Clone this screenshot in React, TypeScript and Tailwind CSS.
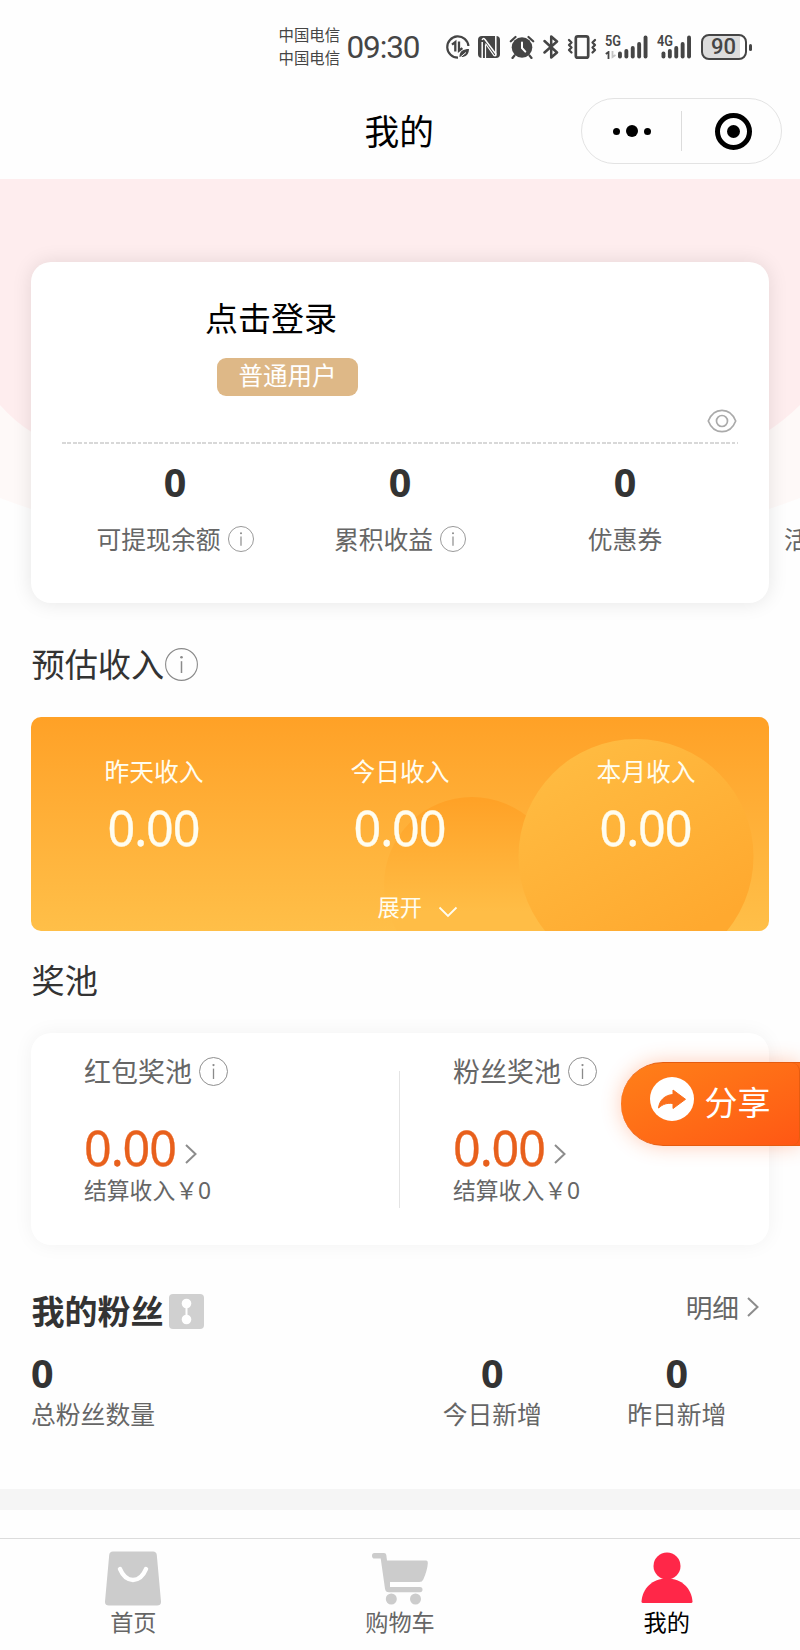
import React from "react";

const FONT = "font-['Noto_Sans','Noto_Sans_CJK_SC',sans-serif]";

function Info({ className }: { className: string }) {
  return (
    <svg viewBox="0 0 33 33" className={className} fill="none" stroke="#8a8a8a">
      <circle cx="16.5" cy="16.5" r="15.9" strokeWidth="1.1" />
      <path d="M16.5 13.2V25" strokeWidth="1.5" />
      <circle cx="16.5" cy="9.2" r="1.3" fill="#8a8a8a" stroke="none" />
    </svg>
  );
}

function Chevron({ className }: { className: string }) {
  return (
    <svg viewBox="0 0 12 20" className={className} fill="none" stroke="#8c8c8c" strokeWidth="2">
      <path d="M1 1l9.5 9L1 19" />
    </svg>
  );
}

function Signal({ label, x0 }: { label: string; x0: number }) {
  const heights = [7, 9.5, 12.5, 16.5, 23];
  return (
    <svg viewBox="0 0 44 26" className="h-[26px] w-[44px] shrink-0 overflow-visible">
      <text x="0" y="12.3" fontFamily="Roboto" fontWeight="600" fontSize="15.5" textLength="16" lengthAdjust="spacingAndGlyphs" fill="#454545">
        {label}
      </text>
      {heights.map((h, i) => (
        <rect key={i} x={x0 + i * 6.4} y={24.5 - h} width="3.9" height={h} rx="1.9" fill="#454545" />
      ))}
    </svg>
  );
}

function StatusBar() {
  return (
    <div className="flex h-[84px] items-start pl-[278.5px] pt-[24px] text-[#454545]">
      <div className="w-[68px] text-[15.4px] leading-[23px]">
        <div>中国电信</div>
        <div>中国电信</div>
      </div>
      <div className="mt-[4px] w-[98.5px] font-['Roboto'] text-[31.5px] leading-[40px] tracking-[-1.1px]">09:30</div>
      <div className="mt-[10px] flex items-center">
        <svg viewBox="0 0 26 26" className="h-[26px] w-[26px]" fill="none" stroke="#454545" strokeWidth="2.2">
          <path d="M23.4 12A10.6 10.6 0 1 0 13 23.6" />
          <path d="M7 10.6L10.3 8v9.5M14 7.5v9.2l3.4-2.6" strokeWidth="2.3" />
          <path d="M14.5 23c-.2-6 4-8 9.5-8-.2 6-3.5 8.5-9.5 8z" fill="#454545" stroke="none" />
          <path d="M15 23.5l6-5" stroke="#fff" strokeWidth="1" />
        </svg>
        <svg viewBox="0 0 22 24" className="ml-[7px] h-[24px] w-[22px]">
          <rect x="0" y="1" width="22" height="22" rx="4" fill="#454545" />
          <path d="M4.2 7v16M4.2 5Q5 2.500 7 4.500L17.800 19V1" stroke="#fff" strokeWidth="1.500" fill="none" />
          <path d="M7.500 9.500V23" stroke="#fff" strokeWidth="1.200" />
          <path d="M7.500 8.500L16 20.500Q18 22 17.800 18" stroke="#fff" strokeWidth="1.200" fill="none" />
        </svg>
        <svg viewBox="0 0 26 24" className="ml-[9px] h-[24px] w-[26px]" fill="none" stroke="#454545" strokeLinecap="round">
          <circle cx="13" cy="12.500" r="10.300" fill="#454545" stroke="none" />
          <path d="M1.800 6.300L6.500 2M24.200 6.300L19.500 2M5.500 20.500L3.500 23M20.500 20.500l2 2.500" strokeWidth="2.200" />
          <path d="M13 7.500v5.500l3.300 3.600" stroke="#fff" strokeWidth="2" />
        </svg>
        <svg viewBox="0 0 16 26" className="ml-[8px] h-[26px] w-[16px]" fill="none" stroke="#454545" strokeWidth="2.500" strokeLinejoin="round" strokeLinecap="round">
          <path d="M1.500 7L14 18.500 8.200 23.500V2.500L14 7.500 1.500 18.500" />
        </svg>
        <svg viewBox="0 0 30 26" className="ml-[8px] h-[26px] w-[30px]" fill="none" stroke="#454545" strokeLinejoin="round" strokeLinecap="round">
          <rect x="8.800" y="2.300" width="12.400" height="21.400" rx="2" strokeWidth="2.700" />
          <path d="M2 6l2.500 2.500L2 11l2.500 2.500L2 16l2.500 2.500M28 6l-2.500 2.500L28 11l-2.500 2.500L28 16l-2.500 2.500" strokeWidth="2.300" />
        </svg>
        <div className="relative ml-[8px]">
          <Signal label="5G" x0={13} />
          <svg viewBox="0 0 12 8" className="absolute left-0 top-[17px] h-[8px] w-[12px]" fill="none" strokeWidth="1.800">
            <path d="M.8 3L3.500 1v7" stroke="#454545" />
            <path d="M7.500 0v6l3-2" stroke="#c4c4c4" />
          </svg>
        </div>
        <div className="ml-[8px]">
          <Signal label="4G" x0={4.5} />
        </div>
        <div className="flex h-[26px] w-[46px] items-center justify-center rounded-[8px] border-2 border-[#454545] bg-[linear-gradient(90deg,#dcdcdc_88%,#fff_88%)] pr-px font-['Roboto'] text-[22px] font-medium leading-none">
          90
        </div>
        <div className="ml-[2px] h-[7px] w-[3px] rounded-sm bg-[#454545]" />
      </div>
    </div>
  );
}

function NavBar() {
  return (
    <div className="flex h-[95px] items-start justify-end pr-[18px]">
      <div className="mr-[147px] mt-[24px] text-[34.7px] leading-[47px] text-black">我的</div>
      <div className="mt-[14px] flex h-[66px] w-[201px] items-center rounded-full border border-[#e3e3e3]">
        <div className="flex w-[99px] items-center justify-center gap-[6px]">
          <span className="h-[7px] w-[7px] rounded-full bg-black" />
          <span className="h-[12px] w-[12px] rounded-full bg-black" />
          <span className="h-[7px] w-[7px] rounded-full bg-black" />
        </div>
        <div className="h-[40px] w-px bg-[#dcdcdc]" />
        <div className="flex flex-1 justify-center pl-[3px]">
          <div className="flex h-[37px] w-[37px] items-center justify-center rounded-full border-[5px] border-black">
            <span className="h-[13px] w-[13px] rounded-full bg-black" />
          </div>
        </div>
      </div>
    </div>
  );
}

function Stat({ label, info }: { label: string; info?: boolean }) {
  return (
    <div className="flex w-[225px] shrink-0 flex-col items-center">
      <div className="text-[39.5px] font-bold leading-[50px] text-[#333]">0</div>
      <div className="mt-[14px] flex h-[36px] items-center gap-[7px] text-[24.8px] leading-[36px] text-[#666]">
        {label}
        {info && <Info className="h-[26px] w-[26px]" />}
      </div>
    </div>
  );
}

function ProfileCard() {
  return (
    <div className="relative mx-[31px] mt-[83px] h-[340.5px] rounded-[20px] bg-white px-[31px] pt-[33px] shadow-[0_0_20px_rgba(0,0,0,0.10)]">
      <div className="ml-[143px] mt-px text-[33px] leading-[46px] text-black">点击登录</div>
      <div className="ml-[155px] mt-[16px] h-[38px] w-[141px] rounded-[9px] bg-[#deb887] text-center text-[24.5px] leading-[36px] text-white">普通用户</div>
      <div className="flex h-[46px] items-end justify-end pb-[9px]">
        <svg viewBox="0 0 30 24" className="mr-[1px] h-[24px] w-[30px]" fill="none" stroke="#aaa" strokeWidth="1.7">
          <path d="M1.3 12C4 5 9 1.3 15 1.3S26 5 28.7 12C26 19 21 22.7 15 22.7S4 19 1.3 12z" />
          <circle cx="15" cy="12" r="5.5" />
        </svg>
      </div>
      <div className="h-[1.5px] bg-[repeating-linear-gradient(90deg,#d8d8d8_0_3.8px,transparent_3.8px_5.4px)]" />
      <div className="ml-[0.5px] mt-[13.5px] flex">
        <Stat label="可提现余额" info />
        <Stat label="累积收益" info />
        <Stat label="优惠券" />
        <div className="shrink-0 pl-[46.5px] pt-[64px] text-[24.8px] leading-[36px] text-[#666]">活</div>
      </div>
    </div>
  );
}

function IncomeCard() {
  return (
    <div className="relative mx-[31px] mt-[29px] h-[214px] overflow-hidden rounded-[10px] bg-gradient-to-b from-[#ffa126] to-[#ffbf48]">
      <svg viewBox="0 0 738 214" className="absolute inset-0 h-full w-full">
        <defs>
          <linearGradient id="small" x1="0" y1="0" x2="0" y2="1">
            <stop offset="0" stopColor="#ffa126" />
            <stop offset=".65" stopColor="#ffbd46" />
          </linearGradient>
          <linearGradient id="large" x1=".2" y1="0" x2=".8" y2="1">
            <stop offset="0" stopColor="#ffbc42" />
            <stop offset=".85" stopColor="#ffa92f" />
          </linearGradient>
        </defs>
        <circle cx="441" cy="168" r="88" fill="url(#small)" />
        <circle cx="605" cy="139.5" r="117.5" fill="url(#large)" />
      </svg>
      <div className="relative grid grid-cols-3 pt-[36px] text-center text-[#fffdf0]">
        {["昨天收入", "今日收入", "本月收入"].map((label) => (
          <div key={label}>
            <div className="text-[24.8px] leading-[36px]">{label}</div>
            <div className="mt-[8.5px] pr-px text-[48.5px] leading-[60px] tracking-[-1.1px] [-webkit-text-stroke:0.3px_#fffdf0]">0.00</div>
          </div>
        ))}
      </div>
      <div className="relative mt-[34.5px] flex items-center pl-[346.5px] text-[22.3px] leading-[32px] text-[#fffdf0]">
        展开
        <svg viewBox="0 0 20 12" className="ml-[16px] mt-[8px] h-[12px] w-[20px]" fill="none" stroke="#fffdf0" strokeWidth="1.8">
          <path d="M1.5 1.5l8.5 8.5 8.5-8.5" />
        </svg>
      </div>
    </div>
  );
}

function Pool({ name }: { name: string }) {
  return (
    <div className="w-[369px] pl-[53px] pt-[20px] text-[#666]">
      <div className="flex items-center gap-[7px] text-[27px] leading-[38px]">
        {name}
        <Info className="h-[29px] w-[29px]" />
      </div>
      <div className="mt-[29px] flex items-center">
        <span className="text-[48.5px] leading-[54px] tracking-[-1.1px] text-[#e8601c] [-webkit-text-stroke:0.3px_#e8601c]">0.00</span>
        <Chevron className="ml-[9px] mt-[14px] h-[20px] w-[12px]" />
      </div>
      <div className="mt-px text-[22.8px] leading-[32px]">结算收入￥0</div>
    </div>
  );
}

function FanStat({ label, className }: { label: string; className: string }) {
  return (
    <div className={className}>
      <div className="text-[39.5px] font-bold leading-[44px] text-[#333]">0</div>
      <div className="mt-[0.5px] text-[24.8px] leading-[36px] text-[#666]">{label}</div>
    </div>
  );
}

function TabBar() {
  return (
    <div className="mt-[28px] grid h-[112px] grid-cols-3 border-t border-[#dcdcdc] pt-[11px] text-center text-[23.2px] leading-[32px] text-[#666]">
      <div className="flex flex-col items-center">
        <svg viewBox="0 0 56 56" className="h-[56px] w-[56px] translate-y-[0.5px]">
          <path d="M8 1h40q3.5 0 3.8 3.5L56 51q.2 4-4 4H4q-4.2 0-4-4L4.2 4.5Q4.5 1 8 1z" fill="#ccc" />
          <path d="M15 18.500c6 14.500 20 14.500 26 0" fill="none" stroke="#fff" strokeWidth="4.500" strokeLinecap="round" />
        </svg>
        <div>首页</div>
      </div>
      <div className="flex flex-col items-center">
        <svg viewBox="0 0 56 56" className="h-[56px] w-[56px]" fill="#ccc">
          <path d="M2.500 3h9.500q2 0 2.300 2l.7 5.500H54q2 0 1.800 3-.5 7-4.500 16-1 2.500-4 2.500H18v5h30q2.500 0 2.500 2.600t-2.500 2.600H17q-3.500 0-4-3.500L8.700 8.500H2.500Q0 8.500 0 5.700T2.500 3z" />
          <circle cx="19.300" cy="49" r="5.500" />
          <circle cx="43.500" cy="49" r="5.500" />
        </svg>
        <div>购物车</div>
      </div>
      <div className="flex flex-col items-center text-black">
        <svg viewBox="0 0 56 56" className="h-[56px] w-[56px]" fill="#ff2748">
          <circle cx="28" cy="16" r="13.500" />
          <path d="M2.500 51.500c1-13 10.500-23 25.500-23s24.500 10 25.500 23q0 1.500-1.500 1.500H4q-1.500 0-1.500-1.500z" />
        </svg>
        <div>我的</div>
      </div>
    </div>
  );
}

export default function App() {
  return (
    <div className={`relative flex h-[1650px] w-[800px] flex-col overflow-hidden bg-[#fefefe] ${FONT}`}>
      <StatusBar />
      <NavBar />
      <svg viewBox="0 0 800 380" className="absolute left-0 top-[179px] h-[380px] w-[800px]">
        <path d="M0 0H800V319Q640 380 400 380T0 319z" fill="#fef9f8" />
        <path d="M0 0H800V226Q785 241 765 254H33Q15 243 0 226z" fill="#feedee" />
      </svg>
      <ProfileCard />

      <div className="mt-[39px] flex items-center pl-[31.5px] text-[33.2px] leading-[46px] text-[#333]">
        预估收入
        <Info className="ml-[0.5px] h-[33px] w-[33px]" />
      </div>
      <IncomeCard />

      <div className="mt-[27px] pl-[31.5px] text-[33.2px] leading-[46px] text-[#333]">奖池</div>
      <div className="mx-[31px] mt-[29px] flex h-[212px] rounded-[20px] bg-white shadow-[0_0_20px_rgba(0,0,0,0.05)]">
        <Pool name="红包奖池" />
        <div className="-ml-px mt-[38px] h-[137px] w-px bg-[#e4e4e4]" />
        <Pool name="粉丝奖池" />
      </div>

      <div className="mt-[44px] flex h-[46px] items-center pl-[31.5px] pr-[40px]">
        <div className="text-[33px] font-bold leading-[46px] text-[#333]">我的粉丝</div>
        <svg viewBox="0 0 35 35" className="ml-[5.5px] h-[35px] w-[35px]">
          <rect width="35" height="35" rx="4" fill="#d0d0d0" />
          <g fill="#fff">
            <circle cx="17.5" cy="9.5" r="4.8" />
            <circle cx="17.5" cy="25.5" r="4.8" />
            <rect x="16.5" y="10" width="2" height="15" />
          </g>
        </svg>
        <div className="-mt-[7px] ml-auto text-[26.7px] leading-[38px] text-[#666]">明细</div>
        <Chevron className="-mt-[9px] ml-[8px] mr-px h-[20px] w-[12px]" />
      </div>
      <div className="mx-[31px] mt-[16.5px] flex">
        <FanStat label="总粉丝数量" className="w-1/2" />
        <FanStat label="今日新增" className="w-1/4 text-center" />
        <FanStat label="昨日新增" className="w-1/4 text-center" />
      </div>

      <div className="mt-auto h-[21px] shrink-0 bg-[#f5f5f5]" />
      <TabBar />

      <div className="absolute right-0 top-[1062px] flex h-[84px] w-[179px] items-center rounded-l-full border-y border-[#e55c10] bg-gradient-to-br from-[#ff8019] to-[#ff5714] pl-[29px] text-white shadow-[0_0_20px_rgba(255,90,20,0.3)]">
        <svg viewBox="0 0 44 44" className="-mt-[10px] h-[44px] w-[44px]">
          <circle cx="22" cy="22" r="22" fill="#fff" />
          <path d="M23 13L35.5 22.3 23 31.5v-5c-6-.7-10 .5-14.500 4.500 1-8 6.500-13 14.500-13.500z" fill="#fb6f1c" stroke="#fb6f1c" strokeWidth="1" strokeLinejoin="round" />
        </svg>
        <div className="-mt-[2px] ml-[10.5px] text-[33px] leading-[46px]">分享</div>
        <span className="absolute right-0 top-0 h-full w-[12px] rounded-r-[8px] border-r border-[#e55c10]" />
      </div>
    </div>
  );
}
